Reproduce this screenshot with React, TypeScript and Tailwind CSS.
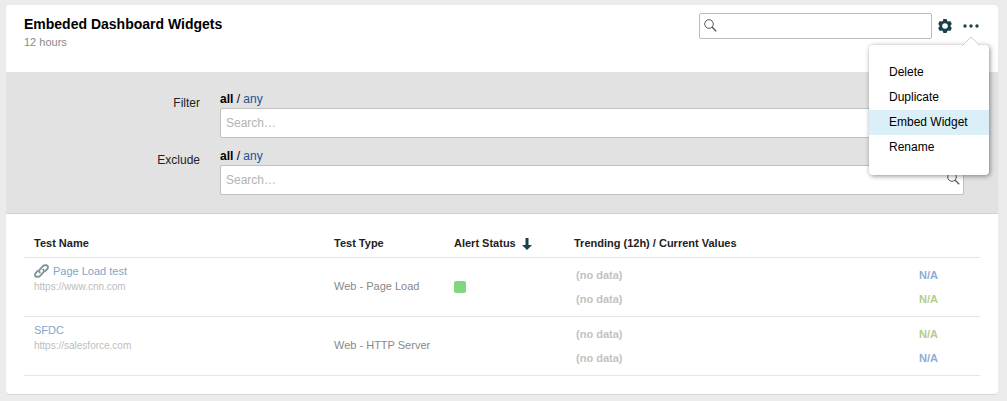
import { useState } from "react";

type Test = {
  name: string;
  url: string;
  type: string;
  linked?: boolean;
  ok?: boolean;
  trends: string[];
};

const tests: Test[] = [
  {
    name: "Page Load test",
    url: "https://www.cnn.com",
    type: "Web - Page Load",
    linked: true,
    ok: true,
    trends: ["text-[#8fadd3]", "text-[#b3cc8e]"],
  },
  {
    name: "SFDC",
    url: "https://salesforce.com",
    type: "Web - HTTP Server",
    trends: ["text-[#b3cc8e]", "text-[#8fadd3]"],
  },
];

const actions = ["Delete", "Duplicate", "Embed Widget", "Rename"];

export default function App() {
  return (
    <div className="bg-[#ebebeb] min-h-screen pl-[6px] pr-[9px] pt-[5px] pb-[6px] font-['Liberation_Sans',Arial,sans-serif] text-xs text-black">
      <main className="bg-white rounded-[4px] border-b border-[#d3d7d7] pb-[18px]">
        <header className="flex justify-between px-[18px] pt-2 h-[67px]">
          <div>
            <h1 className="text-sm leading-[22px] font-bold">
              Embeded Dashboard Widgets
            </h1>
            <p className="text-[11px] leading-[14px] text-[#888]">12 hours</p>
          </div>
          <div className="flex items-center h-[26px]">
            <div className="relative">
              <input
                type="text"
                aria-label="Search tests"
                className="block w-[233px] h-[26px] pl-6 pr-2 bg-white border border-[#bbb] rounded-[2px] outline-none"
              />
              <SearchIcon className="absolute left-[5px] top-[6px]" />
            </div>
            <button aria-label="Settings" className="ml-[6px]">
              <GearIcon />
            </button>
            <ActionsMenu />
          </div>
        </header>

        <section className="bg-[#e2e2e2] border-b border-[#d0d0d0] py-[18px] pr-[34px] flex flex-col gap-[9px]">
          <FilterRow label="Filter" />
          <FilterRow label="Exclude" />
        </section>

        <div className="px-[18px] pt-[17px]">
          <table className="w-full table-fixed text-left text-[11px]">
            <thead>
              <tr className="h-[26px] border-b border-[#e6e6e6] text-[#222]">
                <th className="w-[300px] pl-[10px]">Test Name</th>
                <th className="w-[120px] pl-[10px]">Test Type</th>
                <th className="w-[120px] pl-[10px]">
                  <span className="flex items-center gap-[6px]">
                    Alert Status
                    <SortIcon />
                  </span>
                </th>
                <th className="pl-[10px]">Trending (12h) / Current Values</th>
              </tr>
            </thead>
            <tbody>
              {tests.map((test) => (
                <tr key={test.name} className="h-[59px] border-b border-[#e6e6e6]">
                  <td className="pl-[10px] pt-[5px] align-top">
                    <a
                      href="#"
                      className="flex items-center gap-1 leading-4 text-[#7ea6cb]"
                    >
                      {test.linked && <LinkIcon />}
                      {test.name}
                    </a>
                    <p className="text-[10px] leading-4 text-[#bdbdbd]">
                      {test.url}
                    </p>
                  </td>
                  <td className="pl-[10px] text-[#888]">{test.type}</td>
                  <td className="pl-[10px]">
                    {test.ok && (
                      <div
                        role="img"
                        aria-label="OK"
                        className="size-3 rounded-[2px] bg-[#82d67c]"
                      />
                    )}
                  </td>
                  <td className="pl-3 font-bold leading-6">
                    {test.trends.map((color) => (
                      <div key={color} className="flex justify-between">
                        <span className="text-[#c2c2c2]">(no data)</span>
                        <span className={`w-[61px] ${color}`}>N/A</span>
                      </div>
                    ))}
                  </td>
                </tr>
              ))}
            </tbody>
          </table>
        </div>
      </main>
    </div>
  );
}

const FilterRow = ({ label }: { label: string }) => {
  const id = label.toLowerCase();
  return (
    <div className="flex">
      <label
        htmlFor={id}
        className="w-[194px] pt-[5px] leading-4 text-right text-[#222]"
      >
        {label}
      </label>
      <div className="flex-1 ml-5">
        <p className="leading-[18px]">
          <b>all</b> / <a href="#" className="text-[#1f4f96]">any</a>
        </p>
        <div className="relative">
          <input
            id={id}
            type="text"
            placeholder="Search…"
            className="block w-full h-[30px] pl-[5px] pr-6 bg-white border border-[#c0c0c0] rounded-[2px] outline-none placeholder:text-[#b4b4b4]"
          />
          <SearchIcon className="absolute right-1 top-[7px]" />
        </div>
      </div>
    </div>
  );
};

const ActionsMenu = () => {
  const [open, setOpen] = useState(true);
  return (
    <div className="relative ml-[10px] w-[18px]">
      <button
        aria-label="More actions"
        className="block w-full h-[26px]"
        onClick={() => setOpen(!open)}
      >
        <svg width="18" height="26" viewBox="0 0 18 26" fill="#1b424c">
          <circle cx="3" cy="13" r="1.7" />
          <circle cx="9" cy="13" r="1.7" />
          <circle cx="15" cy="13" r="1.7" />
        </svg>
      </button>
      {open && (
        <div className="absolute z-10 -right-[9px] top-8 w-[120px] py-[15px] bg-white rounded-[4px] shadow-[1px_1px_5px_rgba(0,0,0,0.45)]">
          <svg
            className="absolute right-[9px] -top-[9px]"
            width="18"
            height="10"
            viewBox="0 0 18 10"
          >
            <path d="M0.5 9.5 L9 1 L17.5 9.5" fill="#fff" stroke="#d0d0d0" />
            <path d="M1 10 H17" stroke="#fff" strokeWidth="2" />
          </svg>
          {actions.map((action) => (
            <button
              key={action}
              className={`block w-full h-[25px] pl-5 pb-[2px] text-left ${
                action === "Embed Widget" ? "bg-[#daeff8]" : "hover:bg-[#daeff8]"
              }`}
            >
              {action}
            </button>
          ))}
        </div>
      )}
    </div>
  );
};

const SearchIcon = ({ className }: { className: string }) => (
  <svg
    className={className}
    width="13"
    height="13"
    viewBox="0 0 13 13"
    fill="none"
    stroke="#555"
  >
    <circle cx="5" cy="5" r="4.3" />
    <path d="M8 8 L12.2 12.2" strokeWidth="1.3" />
  </svg>
);

const GearIcon = () => (
  <svg width="14" height="14" viewBox="-7 -7 14 14" fill="none">
    <circle r="4.2" stroke="#1b424c" strokeWidth="2.8" />
    {[0, 60, 120, 180, 240, 300].map((deg) => (
      <path
        key={deg}
        d="M-2.3 -4.6 L-1.6 -7 H1.6 L2.3 -4.6 Z"
        fill="#1b424c"
        transform={`rotate(${deg})`}
      />
    ))}
  </svg>
);

const SortIcon = () => (
  <svg width="10" height="12" viewBox="0 0 10 12" fill="#1b424c">
    <path d="M3.5 0 H6.5 V7 H10 L5 12 L0 7 H3.5 Z" />
  </svg>
);

const LinkIcon = () => (
  <svg
    width="15"
    height="14"
    viewBox="0 0 15 14"
    fill="none"
    stroke="#7f9499"
    strokeWidth="1.9"
    strokeLinejoin="round"
  >
    <path d="M6.2 9 L5.2 7.6 Q4.9 6.6 5.7 5.7 L9.2 1.9 Q9.9 1.2 10.9 1.2 H12.4 Q14.3 1.6 13.9 3.6 L13.4 4.8 L10.8 7.6" />
    <path d="M8.8 5 L9.8 6.4 Q10.1 7.4 9.3 8.3 L5.8 12.1 Q5.1 12.8 4.1 12.8 H2.6 Q0.7 12.4 1.1 10.4 L1.6 9.2 L4.2 6.4" />
  </svg>
);
